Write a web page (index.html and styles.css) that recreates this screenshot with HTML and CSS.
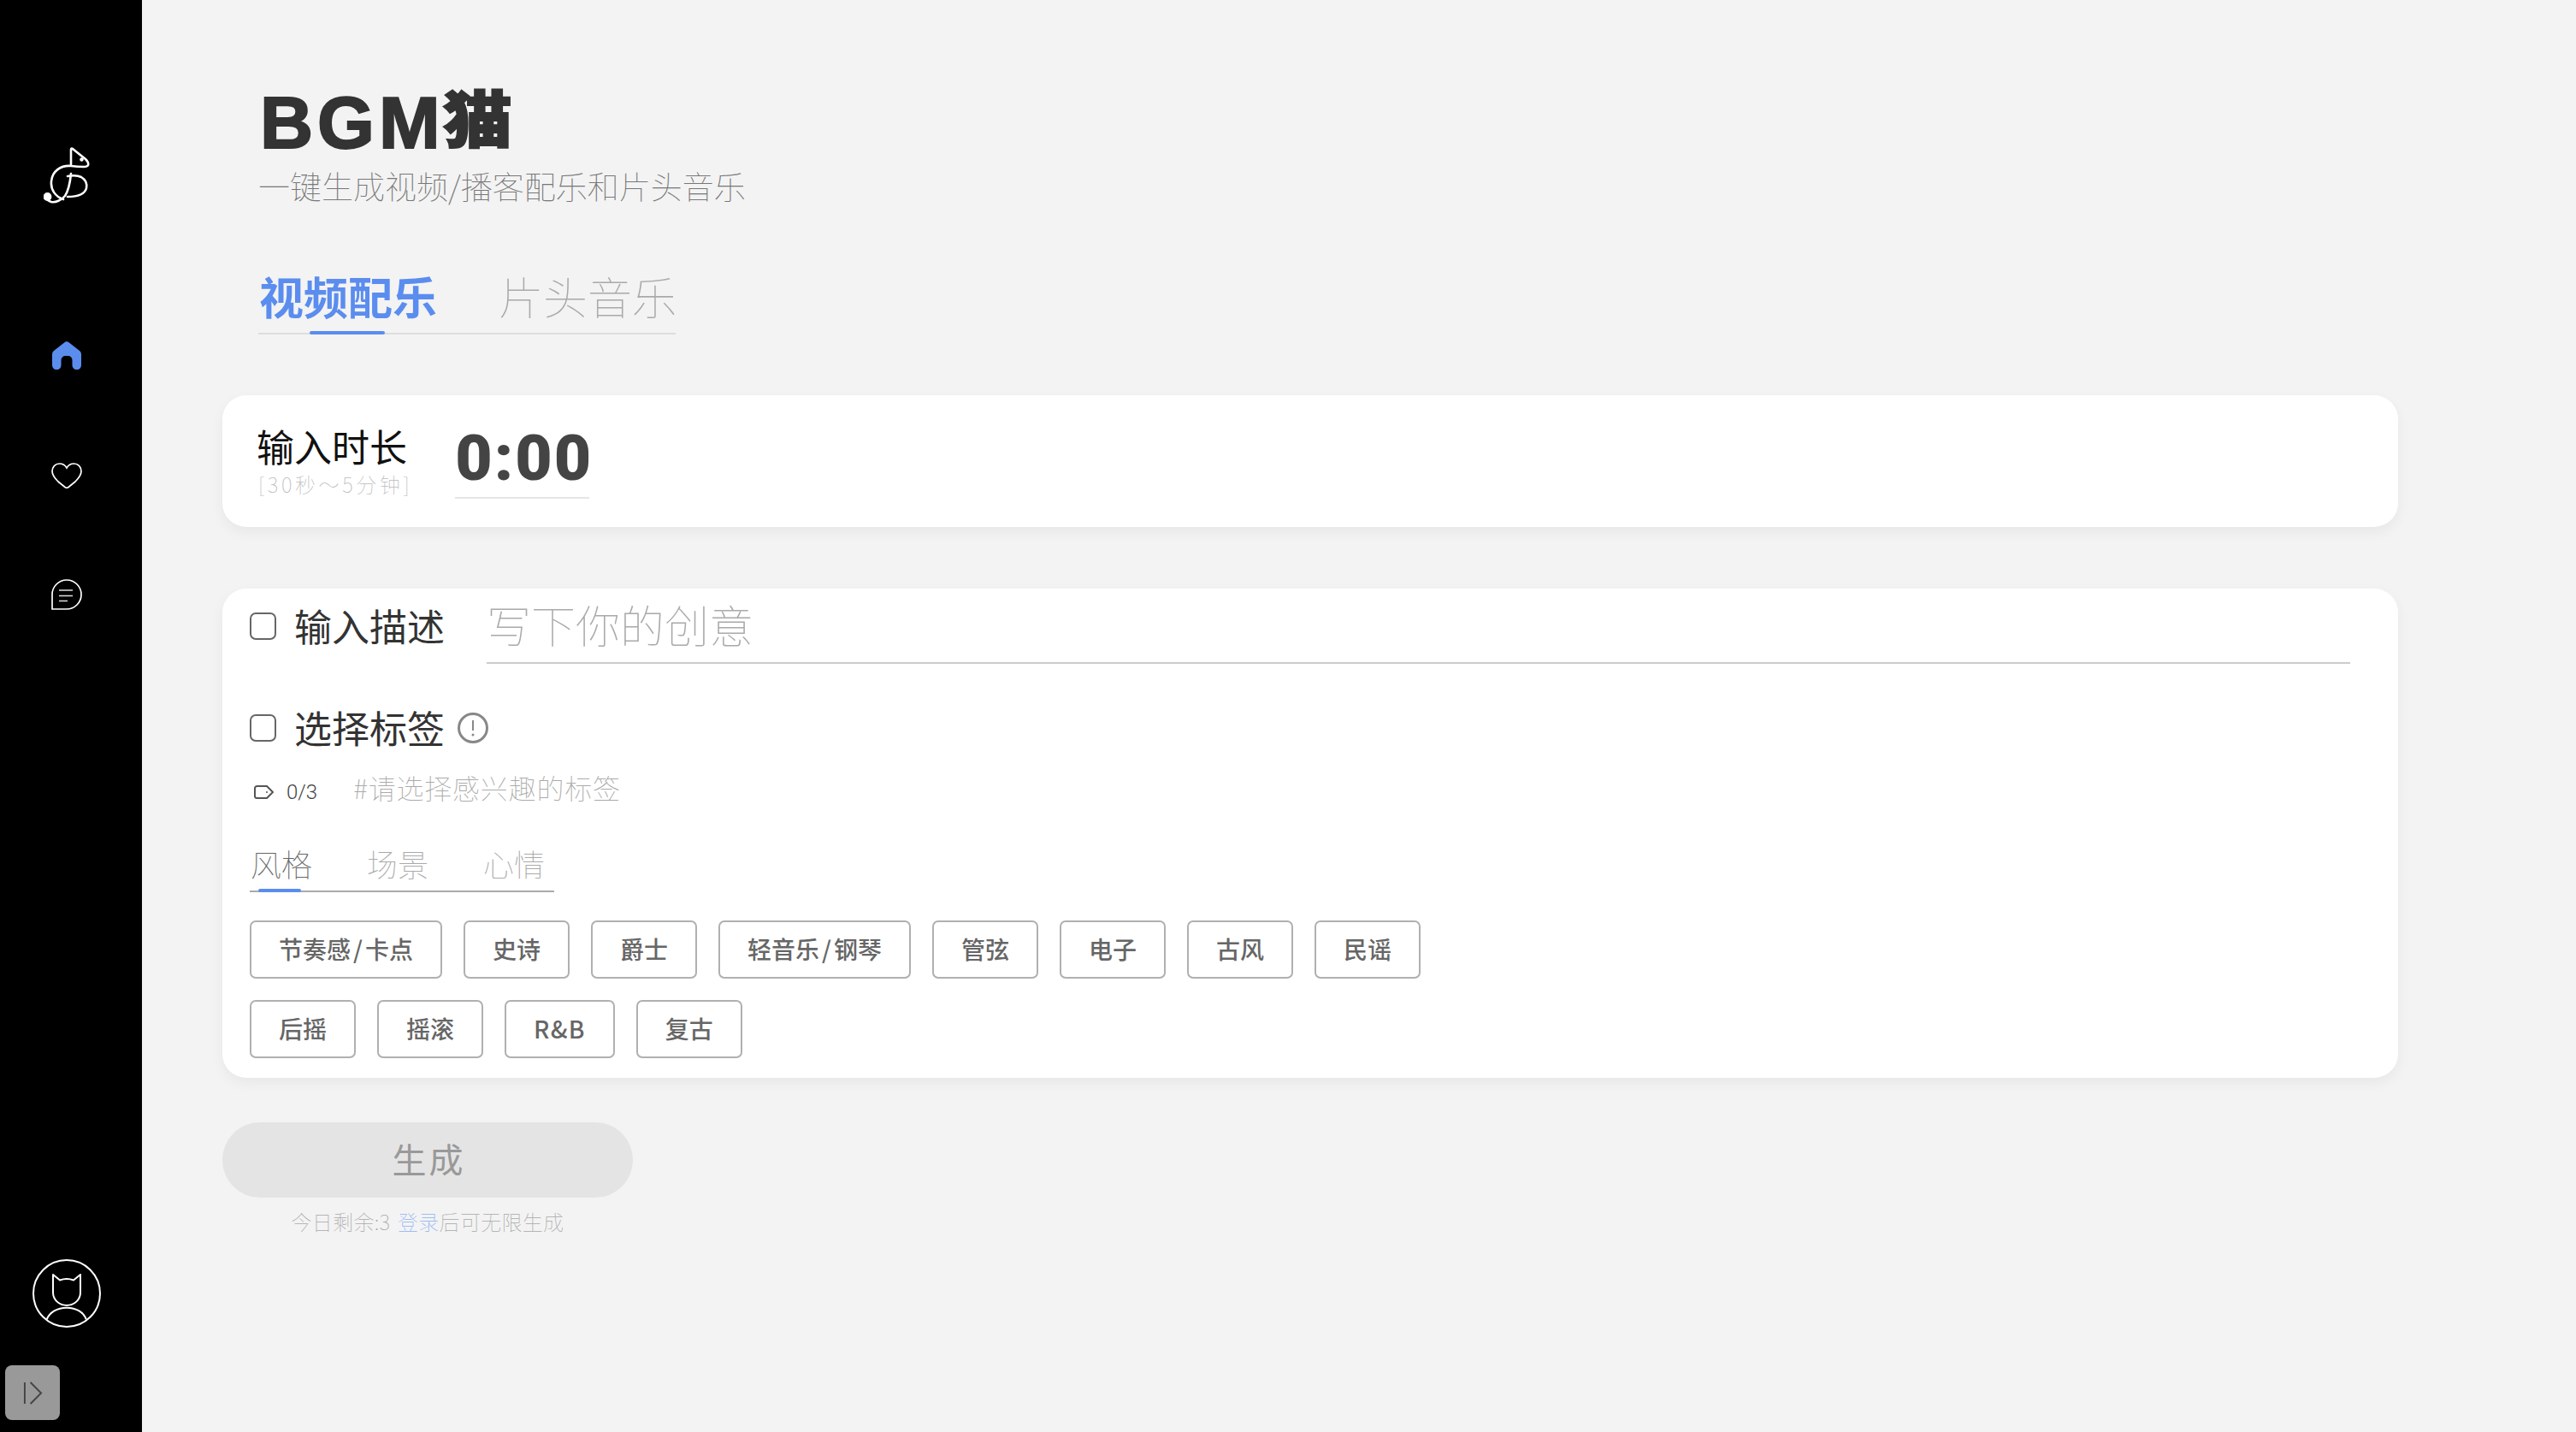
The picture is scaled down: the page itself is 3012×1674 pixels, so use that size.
FILE: index.html
```html
<!DOCTYPE html>
<html lang="zh-CN">
<head>
<meta charset="utf-8">
<title>BGM猫</title>
<link rel="stylesheet" href="styles.css">
</head>
<body>
<div class="app">
  <aside class="sidebar">
    <svg class="logo" viewBox="0 0 54 66" fill="none" stroke="#fff" stroke-width="2.6" stroke-linecap="round" stroke-linejoin="round">
      <path d="M32 22V3q0-2 2-1L49 14q4 4 3 7-1 2-5 2-7 0-15-1C20 21 10 28 9 40c-1 10 5 18 14 21"/>
      <path d="M28 34c6-1 12-1 16 1 5 3 7 8 6 13-2 7-9 10-22 10"/>
      <path d="M32 31c-1 10-3 20-7 26-4 5-11 8-16 7-3-1-5-2-6-5"/>
      <circle cx="4.5" cy="58" r="3.6" fill="#fff"/>
      <circle cx="44.5" cy="14.5" r="1" fill="#fff"/>
    </svg>
    <nav class="nav">
      <svg class="nav-home" viewBox="0 0 34 33" fill="#5b8def"><path d="M14.5 1.2a4 4 0 0 1 5 0L32 11a5 5 0 0 1 2 4V28a5 5 0 0 1-10.5 0V22a5 5 0 0 0-5-5h-3a5 5 0 0 0-5 5V28a5 5 0 0 1-10.5 0V15a5 5 0 0 1 2-4Z"/></svg>
      <svg class="nav-heart" viewBox="0 0 36 30" fill="none" stroke="#fff" stroke-width="1.7"><path d="M18 6C16 2.500 13 1 9.500 1 4.500 1 1 5 1 10c0 4.500 3 8 7 12l8 6.500q2 1.500 4 0l8-6.500c4-4 7-7.500 7-12 0-5-3.500-9-8.500-9C23 1 20 2.500 18 6Z"/></svg>
      <svg class="nav-chat" viewBox="0 0 36 36" fill="none" stroke="#fff" stroke-width="1.7"><path d="M1 35V18A17 17 0 1 1 18 35Z"/><path stroke="#ddd" d="M9 13h16M9 19.500h16M9 25.500h10"/></svg>
    </nav>
    <svg class="avatar" viewBox="0 0 80 80" fill="none" stroke="#fff" stroke-width="2" stroke-linejoin="round">
      <circle cx="40" cy="40" r="39"/>
      <path d="M24 18l8 6.500q8-3 16 0l8-6.500V39a16 15 0 0 1-32 0Z"/>
      <path d="M16.700 70.300C20 62 29 56.700 40 56.700S60 62 62.700 70.300"/>
    </svg>
    <button class="collapse" type="button" aria-label="展开">
      <svg viewBox="0 0 24 28" fill="none" stroke="#444" stroke-width="2"><path d="M2 1v26M9 1l13 13L9 27"/></svg>
    </button>
  </aside>

  <main class="main">
    <header class="head">
      <h1 class="title">BGM<span class="title-cat">猫</span></h1>
      <p class="subtitle">一键生成视频/播客配乐和片头音乐</p>
      <div class="tabs">
        <span class="tab tab-on">视频配乐</span>
        <span class="tab">片头音乐</span>
        <i class="tabs-bar"></i>
      </div>
    </header>

    <section class="card card-time">
      <div class="time-label">
        <div class="time-name">输入时长</div>
        <div class="time-hint">[30秒～5分钟]</div>
      </div>
      <div class="time-value">0:00</div>
    </section>

    <section class="card card-form">
      <div class="row-desc">
        <input class="check" type="checkbox" aria-label="输入描述">
        <span class="row-name">输入描述</span>
        <div class="idea">写下你的创意</div>
      </div>
      <div class="row-tags">
        <input class="check" type="checkbox" aria-label="选择标签">
        <span class="row-name">选择标签</span>
        <svg class="info" viewBox="0 0 36 36" fill="none" stroke="#888" stroke-width="3"><circle cx="18" cy="18" r="16.500"/><path stroke-width="2" d="M18 9v12"/><circle cx="18" cy="26" r="1.500" fill="#888" stroke="none"/></svg>
      </div>
      <div class="count-row">
        <svg class="tag-icon" viewBox="0 0 23 16" fill="none" stroke="#555" stroke-width="2" stroke-linejoin="round"><path d="M3.500 1H15l7 7-7 7H3.500A2.500 2.500 0 0 1 1 12.500v-9A2.500 2.500 0 0 1 3.500 1Z"/><circle cx="15" cy="8" r="1" fill="#555" stroke="none"/></svg>
        <span class="count">0/3</span>
        <span class="count-hint">#请选择感兴趣的标签</span>
      </div>
      <div class="subtabs">
        <span class="subtab subtab-on">风格</span>
        <span class="subtab">场景</span>
        <span class="subtab">心情</span>
        <i class="subtabs-bar"></i>
      </div>
      <div class="chips">
        <div class="chip-row">
          <span class="chip">节奏感<span class="slash">/</span>卡点</span>
          <span class="chip">史诗</span>
          <span class="chip">爵士</span>
          <span class="chip">轻音乐<span class="slash">/</span>钢琴</span>
          <span class="chip">管弦</span>
          <span class="chip">电子</span>
          <span class="chip">古风</span>
          <span class="chip">民谣</span>
        </div>
        <div class="chip-row">
          <span class="chip">后摇</span>
          <span class="chip">摇滚</span>
          <span class="chip chip-latin">R&amp;B</span>
          <span class="chip">复古</span>
        </div>
      </div>
    </section>

    <section class="action">
      <button class="generate" type="button">生成</button>
      <p class="quota">今日剩余:3 <span class="login">登录</span>后可无限生成</p>
    </section>
  </main>
</div>
</body>
</html>
```
FILE: styles.css
```css
* { box-sizing: border-box; }
html, body { margin: 0; height: 100%; overflow: hidden; }
body {
  background: #f3f3f3;
  font-family: "Noto Sans CJK SC", "Liberation Sans", sans-serif;
  color: #333;
}
.app { display: flex; height: 1674px; }

/* sidebar */
.sidebar {
  width: 166px;
  flex: none;
  background: #000;
  display: flex;
  flex-direction: column;
  align-items: center;
  padding-top: 172px;
}
.logo { width: 54px; height: 66px; display: block; margin-left: -10px; }
.nav {
  display: flex;
  flex-direction: column;
  align-items: center;
  margin-top: 161px;
  margin-left: -10px;
}
.nav-home { width: 34px; height: 33px; display: block; }
.nav-heart { width: 36px; height: 30px; display: block; margin-top: 109px; }
.nav-chat { width: 36px; height: 36px; display: block; margin-top: 106px; }
.avatar { width: 80px; height: 80px; display: block; margin-top: auto; margin-left: -10px; }
.collapse {
  width: 64px;
  height: 64px;
  margin: 44px 0 14px;
  align-self: flex-start;
  margin-left: 6px;
  padding: 0;
  background: #999;
  border: 0;
  border-radius: 8px;
  display: flex;
  align-items: center;
  justify-content: center;
}
.collapse svg { width: 23px; height: 27px; display: block; }

/* main */
.main { flex: 1; padding: 98px 0 0 94px; min-width: 0; }
.head { padding-left: 42px; }
.title {
  margin: 0;
  padding-left: 2px;
  font-size: 86px;
  line-height: 90px;
  height: 90px;
  font-weight: 900;
  letter-spacing: 5px;
  color: #333;
  font-family: "Liberation Sans", "Noto Sans CJK SC", sans-serif;
  -webkit-text-stroke: 2px #333;
}
.title-cat {
  display: inline-block;
  font-size: 72px;
  line-height: 72px;
  vertical-align: 7px;
  margin-left: -2px;
  transform: scaleX(1.12);
  transform-origin: left center;
}
.subtitle {
  margin: 5px 0 0;
  font-size: 37px;
  line-height: 48px;
  font-weight: 100;
  color: #777;
}
.tabs {
  position: relative;
  display: flex;
  gap: 72px;
  width: 488px;
  height: 74px;
  margin-top: 76px;
  border-bottom: 2px solid #ddd;
  padding-left: 1px;
}
.tab {
  flex: none;
  white-space: nowrap;
  font-size: 52px;
  line-height: 57px;
  font-weight: 100;
  color: #aaa;
}
.tab-on { color: #5b8def; font-weight: 700; }
.tabs-bar {
  position: absolute;
  left: 60px;
  bottom: -2px;
  width: 88px;
  height: 4px;
  border-radius: 2px;
  background: #5b8def;
}

.card {
  width: 2544px;
  background: #fff;
  border-radius: 28px;
  box-shadow: 0 6px 16px rgba(0, 0, 0, 0.05);
}
.card-time {
  display: flex;
  height: 154px;
  margin-top: 71px;
  padding: 32px 0 0 40px;
}
.time-name { font-size: 44px; line-height: 54px; color: #111; font-weight: 400; }
.time-hint { font-size: 24px; line-height: 30px; font-weight: 100; color: #bbb; margin-top: 3px; letter-spacing: 3.6px; margin-left: 2px; }
.time-value {
  width: 157px;
  height: 89px;
  margin-left: 50px;
  border-bottom: 2px solid #e5e5e5;
  font-family: Roboto, "Liberation Sans", sans-serif;
  font-size: 75px;
  line-height: 82px;
  font-weight: 900;
  letter-spacing: 2px;
  color: #444;
  white-space: nowrap;
}

.card-form { height: 572px; margin-top: 72px; padding: 0 56px 0 32px; }
.check {
  appearance: none;
  width: 31px;
  height: 32px;
  margin: 0;
  flex: none;
  border: 2px solid #666;
  border-radius: 7px;
  background: #fff;
}
.row-name { font-size: 44px; line-height: 54px; color: #333; margin-left: 21px; flex: none; position: relative; top: -1px; }
.row-desc { display: flex; align-items: center; height: 88px; }
.idea {
  flex: 1;
  height: 88px;
  margin-left: 49px;
  border-bottom: 2px solid #ccc;
  font-size: 52px;
  line-height: 84px;
  font-weight: 100;
  color: #aaa;
  padding-left: 0;
}
.row-tags { display: flex; align-items: center; height: 54px; margin-top: 48px; }
.info { width: 36px; height: 36px; margin-left: 15px; display: block; }
.count-row { display: flex; align-items: center; height: 40px; margin-top: 27px; padding-left: 5px; }
.tag-icon { width: 23px; height: 16px; display: block; margin-top: 2px; }
.count { font-family: Roboto, sans-serif; font-size: 24px; font-weight: 300; color: #444; margin-left: 15px; margin-top: 2px; }
.count-hint { font-size: 32px; font-weight: 100; color: #aaa; margin-left: 42px; margin-top: -10px; letter-spacing: 0.8px; }
.subtabs {
  position: relative;
  display: flex;
  gap: 64px;
  width: 356px;
  height: 58px;
  margin-top: 40px;
  padding-left: 1px;
  border-bottom: 2px solid #aaa;
}
.subtab { font-size: 36px; line-height: 48px; font-weight: 100; color: #aaa; }
.subtab-on { color: #666; }
.subtabs-bar {
  position: absolute;
  left: 10px;
  bottom: -2px;
  width: 50px;
  height: 4px;
  border-radius: 2px;
  background: #5b8def;
}
.chips { display: flex; flex-direction: column; gap: 25px; margin-top: 33px; }
.chip-row { display: flex; gap: 25px; }
.chip {
  height: 68px;
  padding: 0 32px;
  border: 2px solid #b0b0b0;
  border-radius: 7px;
  font-size: 28px;
  line-height: 62px;
  font-weight: 500;
  color: #666;
  background: #fff;
}
.slash { margin: 0 3px; }
.chip-latin { letter-spacing: 1.3px; }

.action { width: 480px; margin-top: 52px; }
.generate {
  display: block;
  width: 480px;
  height: 88px;
  border: 0;
  border-radius: 44px;
  background: #e4e4e4;
  color: #999;
  font-family: inherit;
  font-size: 40px;
  letter-spacing: 3px;
  padding: 0 0 5px 3px;
}
.quota {
  margin: 12px 0 0;
  text-align: center;
  font-size: 24px;
  line-height: 32px;
  font-weight: 100;
  letter-spacing: 0.3px;
  color: #aaa;
}
.login { color: #8fb2f3; margin-left: 3px; }
```
